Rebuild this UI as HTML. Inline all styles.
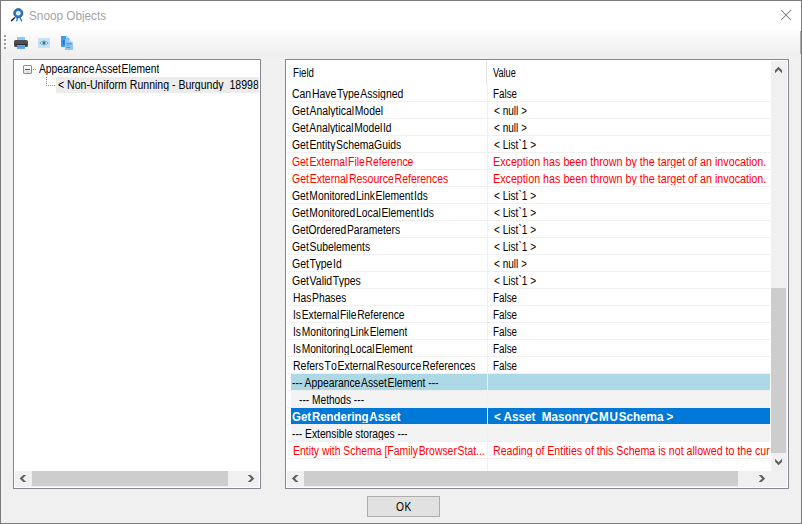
<!DOCTYPE html>
<html><head><meta charset="utf-8">
<style>
html,body{margin:0;padding:0;}
body{width:802px;height:524px;position:relative;overflow:hidden;background:#f0f0f0;font-family:"Liberation Sans",sans-serif;}
.a{position:absolute;}
.t{position:absolute;white-space:pre;font-family:"Liberation Sans",sans-serif;}
.rl{position:absolute;left:287px;width:483px;height:1px;background:#f0f0f0;}
</style></head><body>
<!-- window frame -->
<div class="a" style="left:0;top:0;width:802px;height:524px;box-sizing:border-box;border:1px solid #7a7a7a;"></div>
<div class="a" style="left:1px;top:1px;width:800px;height:30px;background:#fff;"></div>
<!-- toolbar -->
<div class="a" style="left:1px;top:31px;width:800px;height:27px;background:linear-gradient(#fcfcfc,#eeeeee);"></div>
<div class="a" style="left:800px;top:31px;width:1px;height:23px;background:#ababab;"></div>
<svg class="a" style="left:0;top:0" width="802" height="524" viewBox="0 0 802 524">
  <!-- title icon -->
  <line x1="11.6" y1="20.6" x2="14.6" y2="17.8" stroke="#1d2833" stroke-width="1.5" stroke-linecap="round"/>
  <path d="M17.2 18.2 L16.9 20.9 M20.4 18.2 L21.6 20.9" stroke="#1e70cc" stroke-width="1.3" fill="none" stroke-linecap="round"/>
  <circle cx="18.3" cy="13.2" r="4.6" fill="#2179d6" stroke="#3b3530" stroke-width="0.9" stroke-opacity="0.75"/>
  <circle cx="18.3" cy="13.2" r="2.3" fill="#f2f8ff"/>
  <path d="M17.6 12 L19.6 13.2 L17.6 14.4 Z" fill="#bfdcf8"/>
  <!-- close X -->
  <path d="M781 10 L791 20 M791 10 L781 20" stroke="#777" stroke-width="1.05" fill="none"/>
  <!-- grip -->
  <g fill="#ffffff">
    <rect x="5" y="36" width="2" height="2"/><rect x="5" y="40" width="2" height="2"/>
    <rect x="5" y="44" width="2" height="2"/><rect x="5" y="48" width="2" height="2"/>
  </g>
  <g fill="#9a9a9a">
    <rect x="4" y="35" width="2" height="2"/><rect x="4" y="39" width="2" height="2"/>
    <rect x="4" y="43" width="2" height="2"/><rect x="4" y="47" width="2" height="2"/>
  </g>
  <!-- printer -->
  <rect x="17" y="37" width="8" height="4" fill="#8dc9f8"/>
  <rect x="14" y="40" width="14" height="7" rx="1.5" fill="#4e4e4e"/>
  <rect x="15" y="44" width="12" height="1" fill="#2c2c2c"/>
  <rect x="17" y="45" width="8" height="4" fill="#5aa9f0"/>
  <rect x="17" y="46" width="8" height="1" fill="#3d8fe0" opacity=".6"/>
  <rect x="26" y="41" width="1" height="1" fill="#2f8f58"/>
  <!-- eye button -->
  <rect x="38" y="38" width="12" height="10" fill="#c6e2fa"/>
  <path d="M39.8 43 Q44 39 48.2 43 Q44 47 39.8 43 Z" fill="#f2f8fc" stroke="#8c8c8c" stroke-width="0.85"/>
  <circle cx="44" cy="43" r="1.85" fill="#6fd3d8"/>
  <circle cx="44" cy="43" r="1.45" fill="#078a90"/>
  <!-- docs icon -->
  <polygon points="61,36 66.5,36 70,39.5 70,47 61,47" fill="#3d9bf2"/>
  <polygon points="66,36 66,38.6 68.6,38.6" fill="#cfe6fb"/>
  <rect x="62.8" y="40" width="2" height="5" fill="#2a6cc0" opacity=".75"/>
  <polygon points="65,39.2 69.5,39.2 73,42.7 73,50 65,50" fill="#8ec7f7"/>
  <polygon points="69.4,39.2 69.4,41.8 72,41.8" fill="#d8ecfd"/>
  <rect x="66.3" y="43" width="5.5" height="1.4" fill="#4a8fd8" opacity=".85"/>
  <rect x="66.3" y="45.3" width="4.5" height="1" fill="#6aa8e4" opacity=".8"/>
  <rect x="66.3" y="47" width="4" height="1" fill="#4a8fd8" opacity=".85"/>
</svg>

<!-- left panel -->
<div class="a" style="left:13px;top:59px;width:248px;height:430px;box-sizing:border-box;border:1px solid #828790;background:#fff;"></div>
<!-- tree -->
<div class="a" style="left:23px;top:65px;width:9px;height:9px;box-sizing:border-box;border:1px solid #8f8f8f;border-radius:1px;background:linear-gradient(#fcfcfc,#dedede);"></div>
<div class="a" style="left:25px;top:69px;width:5px;height:1px;background:#3b5aa8;"></div>
<svg class="a" style="left:0;top:0" width="100" height="100">
  <g fill="#8a8a8a">
    <rect x="33" y="69" width="1" height="1"/><rect x="35" y="69" width="1" height="1"/>
    <rect x="46" y="77" width="1" height="1"/><rect x="46" y="79" width="1" height="1"/>
    <rect x="46" y="81" width="1" height="1"/><rect x="46" y="83" width="1" height="1"/>
    <rect x="46" y="85" width="1" height="1"/><rect x="48" y="85" width="1" height="1"/>
    <rect x="50" y="85" width="1" height="1"/><rect x="52" y="85" width="1" height="1"/>
    <rect x="54" y="85" width="1" height="1"/>
  </g>
</svg>
<div class="a" style="left:56px;top:77px;width:203px;height:16px;background:#ececec;"></div>
<!-- left hscroll -->
<div class="a" style="left:15px;top:471px;width:244px;height:16px;background:#f0f0f0;"></div>
<div class="a" style="left:32px;top:471px;width:196px;height:15px;background:#cdcdcd;"></div>

<!-- right panel -->
<div class="a" style="left:285px;top:59px;width:504px;height:430px;box-sizing:border-box;border:1px solid #828790;background:#fff;"></div>
<div class="a" style="left:486px;top:61px;width:1px;height:24px;background:#e5e5e5;"></div>
<div class="a" style="left:487px;top:85px;width:1px;height:386px;background:#f0f0f0;"></div>
<!-- row backgrounds -->
<div class="a" style="left:291px;top:374px;width:196px;height:16px;background:#add8e6;"></div>
<div class="a" style="left:488px;top:374px;width:282px;height:16px;background:#add8e6;"></div>
<div class="a" style="left:291px;top:391px;width:196px;height:16px;background:#f3f3f3;"></div>
<div class="a" style="left:488px;top:391px;width:282px;height:16px;background:#f3f3f3;"></div>
<div class="a" style="left:291px;top:408px;width:196px;height:16px;background:#0078d7;"></div>
<div class="a" style="left:488px;top:408px;width:282px;height:16px;background:#0078d7;"></div>
<div class="a" style="left:291px;top:425px;width:196px;height:16px;background:#f3f3f3;"></div>
<div class="a" style="left:488px;top:425px;width:282px;height:16px;background:#f3f3f3;"></div>
<div class="rl" style="top:101px"></div>
<div class="rl" style="top:118px"></div>
<div class="rl" style="top:135px"></div>
<div class="rl" style="top:152px"></div>
<div class="rl" style="top:169px"></div>
<div class="rl" style="top:186px"></div>
<div class="rl" style="top:203px"></div>
<div class="rl" style="top:220px"></div>
<div class="rl" style="top:237px"></div>
<div class="rl" style="top:254px"></div>
<div class="rl" style="top:271px"></div>
<div class="rl" style="top:288px"></div>
<div class="rl" style="top:305px"></div>
<div class="rl" style="top:322px"></div>
<div class="rl" style="top:339px"></div>
<div class="rl" style="top:356px"></div>
<div class="rl" style="top:373px"></div>
<div class="rl" style="top:390px"></div>
<div class="rl" style="top:407px"></div>
<div class="rl" style="top:424px"></div>
<div class="rl" style="top:441px"></div>
<div class="rl" style="top:458px"></div>
<!-- right scrollbars -->
<div class="a" style="left:771px;top:61px;width:16px;height:426px;background:#f0f0f0;"></div>
<div class="a" style="left:771px;top:288px;width:15px;height:165px;background:#cdcdcd;"></div>
<div class="a" style="left:287px;top:471px;width:484px;height:16px;background:#f0f0f0;"></div>
<div class="a" style="left:304px;top:471px;width:434px;height:15px;background:#cdcdcd;"></div>

<!-- chevrons -->
<svg class="a" style="left:0;top:0" width="802" height="524">
 <g fill="#606060">
  <polygon points="3.3,-3.5 0.3,-3.5 -3.3,0 0.3,3.5 3.3,3.5 -0.3,0" transform="translate(22.9,478.5) rotate(0)"/>
  <polygon points="3.3,-3.5 0.3,-3.5 -3.3,0 0.3,3.5 3.3,3.5 -0.3,0" transform="translate(251.0,478.5) rotate(180)"/>
  <polygon points="3.3,-3.5 0.3,-3.5 -3.3,0 0.3,3.5 3.3,3.5 -0.3,0" transform="translate(295.2,478.45) rotate(0)"/>
  <polygon points="3.3,-3.5 0.3,-3.5 -3.3,0 0.3,3.5 3.3,3.5 -0.3,0" transform="translate(761.9,478.5) rotate(180)"/>
  <polygon points="3.3,-3.5 0.3,-3.5 -3.3,0 0.3,3.5 3.3,3.5 -0.3,0" transform="translate(778.5,70.0) rotate(90)"/>
  <polygon points="3.3,-3.5 0.3,-3.5 -3.3,0 0.3,3.5 3.3,3.5 -0.3,0" transform="translate(778.6,462.0) rotate(-90)"/>
 </g>
</svg>

<!-- OK button -->
<div class="a" style="left:367px;top:496px;width:73px;height:21px;box-sizing:border-box;border:1px solid #adadad;background:#e1e1e1;"></div>

<div class="t" style="left:29.32px;top:9px;color:#a3a3a3;font-size:12px;line-height:14px;font-weight:normal;letter-spacing:0.000px;transform:scaleX(0.9795);transform-origin:0 0;height:13px;overflow:hidden">Snoop Objects</div>
<div class="t" style="left:39.10px;top:62px;color:#000;font-size:12px;line-height:14px;font-weight:normal;letter-spacing:0.000px;transform:scaleX(0.8574);transform-origin:0 0;height:13px;overflow:hidden">Appearanc<span style="letter-spacing:0.8px">e</span>Asse<span style="letter-spacing:0.8px">t</span>Element</div>
<div class="t" style="left:58.30px;top:78px;color:#000;font-size:12px;line-height:14px;font-weight:normal;letter-spacing:0.000px;transform:scaleX(0.8789);transform-origin:0 0;height:13px;overflow:hidden">&lt; Non-Uniform Running - Burgundy  18998</div>
<div class="t" style="left:293.19px;top:66px;color:#000;font-size:12px;line-height:14px;font-weight:normal;letter-spacing:0.000px;transform:scaleX(0.8080);transform-origin:0 0;height:13px;overflow:hidden">Field</div>
<div class="t" style="left:492.60px;top:66px;color:#000;font-size:12px;line-height:14px;font-weight:normal;letter-spacing:0.000px;transform:scaleX(0.7633);transform-origin:0 0;height:13px;overflow:hidden">Value</div>
<div class="t" style="left:292.30px;top:87px;color:#000;font-size:12px;line-height:14px;font-weight:normal;letter-spacing:0.000px;transform:scaleX(0.8711);transform-origin:0 0;height:13px;overflow:hidden">Ca<span style="letter-spacing:0.8px">n</span>Hav<span style="letter-spacing:0.8px">e</span>Typ<span style="letter-spacing:0.8px">e</span>Assigned</div>
<div class="t" style="left:493.08px;top:87px;color:#000;font-size:12px;line-height:14px;font-weight:normal;letter-spacing:0.000px;transform:scaleX(0.8214);transform-origin:0 0;height:13px;overflow:hidden">False</div>
<div class="t" style="left:292.30px;top:104px;color:#000;font-size:12px;line-height:14px;font-weight:normal;letter-spacing:0.000px;transform:scaleX(0.8667);transform-origin:0 0;height:13px;overflow:hidden">Ge<span style="letter-spacing:0.8px">t</span>Analytica<span style="letter-spacing:0.8px">l</span>Model</div>
<div class="t" style="left:493.90px;top:104px;color:#000;font-size:12px;line-height:14px;font-weight:normal;letter-spacing:0.000px;transform:scaleX(0.8385);transform-origin:0 0;height:13px;overflow:hidden">&lt; null &gt;</div>
<div class="t" style="left:292.30px;top:121px;color:#000;font-size:12px;line-height:14px;font-weight:normal;letter-spacing:0.000px;transform:scaleX(0.8595);transform-origin:0 0;height:13px;overflow:hidden">Ge<span style="letter-spacing:0.8px">t</span>Analytica<span style="letter-spacing:0.8px">l</span>Mode<span style="letter-spacing:0.8px">l</span>Id</div>
<div class="t" style="left:493.90px;top:121px;color:#000;font-size:12px;line-height:14px;font-weight:normal;letter-spacing:0.000px;transform:scaleX(0.8385);transform-origin:0 0;height:13px;overflow:hidden">&lt; null &gt;</div>
<div class="t" style="left:292.30px;top:138px;color:#000;font-size:12px;line-height:14px;font-weight:normal;letter-spacing:0.000px;transform:scaleX(0.8643);transform-origin:0 0;height:13px;overflow:hidden">Ge<span style="letter-spacing:0.8px">t</span>Entit<span style="letter-spacing:0.8px">y</span>SchemaGuids</div>
<div class="t" style="left:493.90px;top:138px;color:#000;font-size:12px;line-height:14px;font-weight:normal;letter-spacing:0.000px;transform:scaleX(0.8420);transform-origin:0 0;height:13px;overflow:hidden">&lt; List`1 &gt;</div>
<div class="t" style="left:292.30px;top:155px;color:#f00;font-size:12px;line-height:14px;font-weight:normal;letter-spacing:0.000px;transform:scaleX(0.8636);transform-origin:0 0;height:13px;overflow:hidden">Ge<span style="letter-spacing:0.8px">t</span>Externa<span style="letter-spacing:0.8px">l</span>Fil<span style="letter-spacing:0.8px">e</span>Reference</div>
<div class="t" style="left:493.01px;top:155px;color:#f00;font-size:12px;line-height:14px;font-weight:normal;letter-spacing:0.000px;transform:scaleX(0.8944);transform-origin:0 0;height:13px;overflow:hidden">Exception has been thrown by the target of an invocation.</div>
<div class="t" style="left:292.30px;top:172px;color:#f00;font-size:12px;line-height:14px;font-weight:normal;letter-spacing:0.000px;transform:scaleX(0.8753);transform-origin:0 0;height:13px;overflow:hidden">Ge<span style="letter-spacing:0.8px">t</span>Externa<span style="letter-spacing:0.8px">l</span>Resourc<span style="letter-spacing:0.8px">e</span>References</div>
<div class="t" style="left:493.01px;top:172px;color:#f00;font-size:12px;line-height:14px;font-weight:normal;letter-spacing:0.000px;transform:scaleX(0.8944);transform-origin:0 0;height:13px;overflow:hidden">Exception has been thrown by the target of an invocation.</div>
<div class="t" style="left:292.30px;top:189px;color:#000;font-size:12px;line-height:14px;font-weight:normal;letter-spacing:0.000px;transform:scaleX(0.8595);transform-origin:0 0;height:13px;overflow:hidden">Ge<span style="letter-spacing:0.8px">t</span>Monitore<span style="letter-spacing:0.8px">d</span>Lin<span style="letter-spacing:0.8px">k</span>Elemen<span style="letter-spacing:0.8px">t</span>Ids</div>
<div class="t" style="left:493.90px;top:189px;color:#000;font-size:12px;line-height:14px;font-weight:normal;letter-spacing:0.000px;transform:scaleX(0.8420);transform-origin:0 0;height:13px;overflow:hidden">&lt; List`1 &gt;</div>
<div class="t" style="left:292.30px;top:206px;color:#000;font-size:12px;line-height:14px;font-weight:normal;letter-spacing:0.000px;transform:scaleX(0.8612);transform-origin:0 0;height:13px;overflow:hidden">Ge<span style="letter-spacing:0.8px">t</span>Monitore<span style="letter-spacing:0.8px">d</span>Loca<span style="letter-spacing:0.8px">l</span>Elemen<span style="letter-spacing:0.8px">t</span>Ids</div>
<div class="t" style="left:493.90px;top:206px;color:#000;font-size:12px;line-height:14px;font-weight:normal;letter-spacing:0.000px;transform:scaleX(0.8420);transform-origin:0 0;height:13px;overflow:hidden">&lt; List`1 &gt;</div>
<div class="t" style="left:292.30px;top:223px;color:#000;font-size:12px;line-height:14px;font-weight:normal;letter-spacing:0.000px;transform:scaleX(0.8563);transform-origin:0 0;height:13px;overflow:hidden">GetOrdere<span style="letter-spacing:0.8px">d</span>Parameters</div>
<div class="t" style="left:493.90px;top:223px;color:#000;font-size:12px;line-height:14px;font-weight:normal;letter-spacing:0.000px;transform:scaleX(0.8420);transform-origin:0 0;height:13px;overflow:hidden">&lt; List`1 &gt;</div>
<div class="t" style="left:292.30px;top:240px;color:#000;font-size:12px;line-height:14px;font-weight:normal;letter-spacing:0.000px;transform:scaleX(0.8667);transform-origin:0 0;height:13px;overflow:hidden">Ge<span style="letter-spacing:0.8px">t</span>Subelements</div>
<div class="t" style="left:493.90px;top:240px;color:#000;font-size:12px;line-height:14px;font-weight:normal;letter-spacing:0.000px;transform:scaleX(0.8420);transform-origin:0 0;height:13px;overflow:hidden">&lt; List`1 &gt;</div>
<div class="t" style="left:292.30px;top:257px;color:#000;font-size:12px;line-height:14px;font-weight:normal;letter-spacing:0.000px;transform:scaleX(0.8737);transform-origin:0 0;height:13px;overflow:hidden">Ge<span style="letter-spacing:0.8px">t</span>Typ<span style="letter-spacing:0.8px">e</span>Id</div>
<div class="t" style="left:493.90px;top:257px;color:#000;font-size:12px;line-height:14px;font-weight:normal;letter-spacing:0.000px;transform:scaleX(0.8385);transform-origin:0 0;height:13px;overflow:hidden">&lt; null &gt;</div>
<div class="t" style="left:292.30px;top:274px;color:#000;font-size:12px;line-height:14px;font-weight:normal;letter-spacing:0.000px;transform:scaleX(0.8734);transform-origin:0 0;height:13px;overflow:hidden">Ge<span style="letter-spacing:0.8px">t</span>Vali<span style="letter-spacing:0.8px">d</span>Types</div>
<div class="t" style="left:493.90px;top:274px;color:#000;font-size:12px;line-height:14px;font-weight:normal;letter-spacing:0.000px;transform:scaleX(0.8420);transform-origin:0 0;height:13px;overflow:hidden">&lt; List`1 &gt;</div>
<div class="t" style="left:292.64px;top:291px;color:#000;font-size:12px;line-height:14px;font-weight:normal;letter-spacing:0.000px;transform:scaleX(0.8590);transform-origin:0 0;height:13px;overflow:hidden">Ha<span style="letter-spacing:0.8px">s</span>Phases</div>
<div class="t" style="left:493.08px;top:291px;color:#000;font-size:12px;line-height:14px;font-weight:normal;letter-spacing:0.000px;transform:scaleX(0.8214);transform-origin:0 0;height:13px;overflow:hidden">False</div>
<div class="t" style="left:292.65px;top:308px;color:#000;font-size:12px;line-height:14px;font-weight:normal;letter-spacing:0.000px;transform:scaleX(0.8543);transform-origin:0 0;height:13px;overflow:hidden">I<span style="letter-spacing:0.8px">s</span>Externa<span style="letter-spacing:0.8px">l</span>Fil<span style="letter-spacing:0.8px">e</span>Reference</div>
<div class="t" style="left:493.08px;top:308px;color:#000;font-size:12px;line-height:14px;font-weight:normal;letter-spacing:0.000px;transform:scaleX(0.8214);transform-origin:0 0;height:13px;overflow:hidden">False</div>
<div class="t" style="left:292.65px;top:325px;color:#000;font-size:12px;line-height:14px;font-weight:normal;letter-spacing:0.000px;transform:scaleX(0.8534);transform-origin:0 0;height:13px;overflow:hidden">I<span style="letter-spacing:0.8px">s</span>Monitorin<span style="letter-spacing:0.8px">g</span>Lin<span style="letter-spacing:0.8px">k</span>Element</div>
<div class="t" style="left:493.08px;top:325px;color:#000;font-size:12px;line-height:14px;font-weight:normal;letter-spacing:0.000px;transform:scaleX(0.8214);transform-origin:0 0;height:13px;overflow:hidden">False</div>
<div class="t" style="left:292.65px;top:342px;color:#000;font-size:12px;line-height:14px;font-weight:normal;letter-spacing:0.000px;transform:scaleX(0.8514);transform-origin:0 0;height:13px;overflow:hidden">I<span style="letter-spacing:0.8px">s</span>Monitorin<span style="letter-spacing:0.8px">g</span>Loca<span style="letter-spacing:0.8px">l</span>Element</div>
<div class="t" style="left:493.08px;top:342px;color:#000;font-size:12px;line-height:14px;font-weight:normal;letter-spacing:0.000px;transform:scaleX(0.8214);transform-origin:0 0;height:13px;overflow:hidden">False</div>
<div class="t" style="left:292.63px;top:359px;color:#000;font-size:12px;line-height:14px;font-weight:normal;letter-spacing:0.000px;transform:scaleX(0.8726);transform-origin:0 0;height:13px;overflow:hidden">Refer<span style="letter-spacing:0.8px">s</span>T<span style="letter-spacing:0.8px">o</span>Externa<span style="letter-spacing:0.8px">l</span>Resourc<span style="letter-spacing:0.8px">e</span>References</div>
<div class="t" style="left:493.08px;top:359px;color:#000;font-size:12px;line-height:14px;font-weight:normal;letter-spacing:0.000px;transform:scaleX(0.8214);transform-origin:0 0;height:13px;overflow:hidden">False</div>
<div class="t" style="left:292.30px;top:376px;color:#000;font-size:12px;line-height:14px;font-weight:normal;letter-spacing:0.000px;transform:scaleX(0.8606);transform-origin:0 0;height:13px;overflow:hidden">--- Appearanc<span style="letter-spacing:0.8px">e</span>Asse<span style="letter-spacing:0.8px">t</span>Element ---</div>
<div class="t" style="left:298.50px;top:393px;color:#000;font-size:12px;line-height:14px;font-weight:normal;letter-spacing:0.000px;transform:scaleX(0.8481);transform-origin:0 0;height:13px;overflow:hidden">--- Methods ---</div>
<div class="t" style="left:292.30px;top:410px;color:#fff;font-size:12px;line-height:14px;font-weight:bold;letter-spacing:0.000px;transform:scaleX(0.9553);transform-origin:0 0;height:13px;overflow:hidden">Ge<span style="letter-spacing:0.8px">t</span>Renderin<span style="letter-spacing:0.8px">g</span>Asset</div>
<div class="t" style="left:493.90px;top:410px;color:#fff;font-size:12px;line-height:14px;font-weight:bold;letter-spacing:0.000px;transform:scaleX(0.9714);transform-origin:0 0;height:13px;overflow:hidden">&lt; Asset  Masonry<span style="letter-spacing:0.8px">C</span><span style="letter-spacing:0.8px">M</span><span style="letter-spacing:0.8px">U</span>Schema &gt;</div>
<div class="t" style="left:292.30px;top:427px;color:#000;font-size:12px;line-height:14px;font-weight:normal;letter-spacing:0.000px;transform:scaleX(0.8548);transform-origin:0 0;height:13px;overflow:hidden">--- Extensible storages ---</div>
<div class="t" style="left:292.63px;top:444px;color:#f00;font-size:12px;line-height:14px;font-weight:normal;letter-spacing:0.000px;transform:scaleX(0.8676);transform-origin:0 0">Entity with Schema [Famil<span style="letter-spacing:0.8px">y</span>Browse<span style="letter-spacing:0.8px">r</span>Stat...</div>
<div class="t" style="left:493.02px;top:444px;color:#f00;font-size:12px;line-height:14px;font-weight:normal;letter-spacing:0.000px;transform:scaleX(0.8846);transform-origin:0 0;height:13px;overflow:hidden;width:313.11px;overflow:hidden">Reading of Entities of this Schema is not allowed to the cur</div>
<div class="t" style="left:396.00px;top:500px;color:#000;font-size:12px;line-height:14px;font-weight:normal;letter-spacing:0.000px;transform:scaleX(0.8500);transform-origin:0 0;height:13px;overflow:hidden"><span style="letter-spacing:0.8px">O</span>K</div>
</body></html>
